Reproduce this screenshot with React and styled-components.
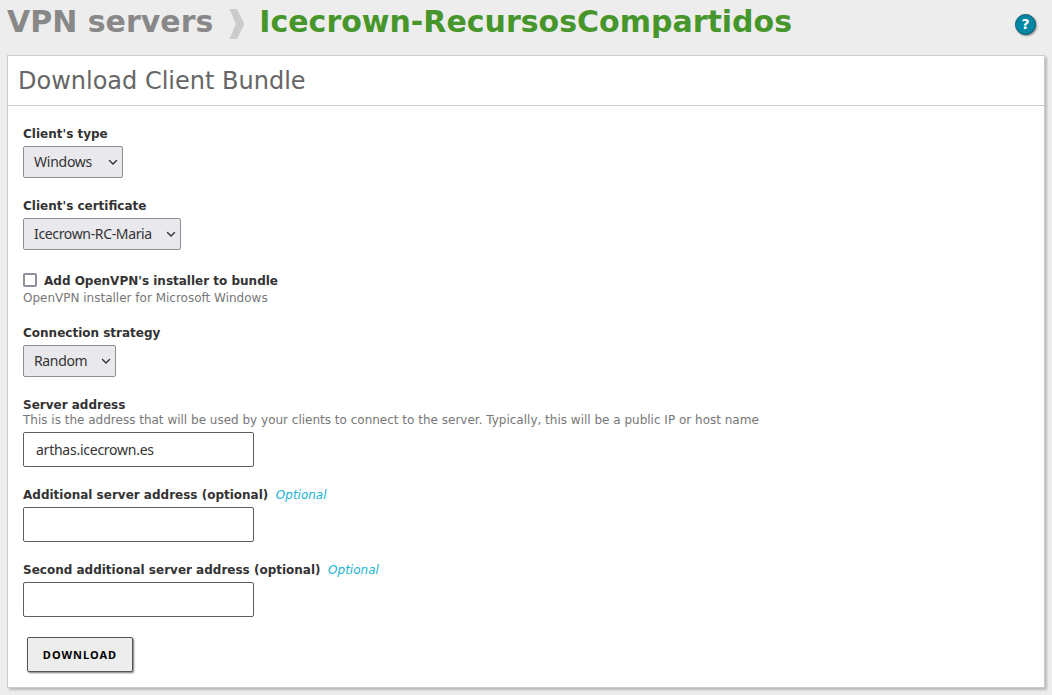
import React from "react";
import styled, { createGlobalStyle } from "styled-components";

const GlobalStyle = createGlobalStyle`
  * { box-sizing: border-box; }
  body {
    margin: 0;
    background: #ededed;
    color: #333;
    font: 12px/16px "DejaVu Sans", sans-serif;
  }
`;

const Page = styled.div`
  height: 695px;
  padding: 0 7px;
  overflow: hidden;
`;

const TopBar = styled.header`
  display: flex;
  height: 55px;
  justify-content: space-between;
  padding: 3px 9px 0 0;
`;

const Title = styled.h1`
  display: flex;
  margin: 0;
  font-size: 30px;
  line-height: 38px;
  font-weight: bold;
  color: #46962b;
  white-space: nowrap;
`;

const Crumb = styled.span`
  color: #888;
`;

const Separator = styled.svg`
  width: 16px;
  height: 30px;
  margin: 6px 14px 0 16px;
  fill: #ccc;
`;

const HelpButton = styled.a`
  width: 21px;
  height: 21px;
  margin-top: 11px;
  border: 1px solid #075e70;
  border-radius: 50%;
  background: #0486a5;
  box-shadow: 1px 1px 2px #888;
  color: #fff;
  font-size: 14px;
  line-height: 19px;
  font-weight: bold;
  text-align: center;
`;

const Panel = styled.main`
  height: 633px;
  border: 1px solid #ccc;
  background: #fff;
  box-shadow: 2px 2px 2px #bbb;
`;

const PanelTitle = styled.h2`
  height: 50px;
  margin: 0;
  padding: 0 10px;
  border-bottom: 1px solid #ccc;
  font-size: 24px;
  line-height: 51px;
  font-weight: normal;
  color: #666;
`;

const Form = styled.form`
  padding: 20px 15px 0;
`;

const Field = styled.div`
  display: flex;
  flex-direction: column;
  align-items: flex-start;
  margin-bottom: ${(p) => p.$after ?? 20}px;
`;

const Label = styled.label`
  display: flex;
  align-items: center;
  font-weight: bold;
  white-space: nowrap;
`;

const Optional = styled.span`
  margin-left: 7.5px;
  font-style: italic;
  font-weight: normal;
  color: #1ab4d3;
`;

const Help = styled.p`
  margin: ${(p) => p.$before ?? -1}px 0 0;
  color: #777;
  white-space: nowrap;
`;

const Select = styled.button`
  display: flex;
  align-items: center;
  justify-content: space-between;
  width: ${(p) => p.$width}px;
  height: 32px;
  margin-top: 4px;
  padding: 0 4px 2px 10px;
  border: 1px solid #8f8f8f;
  border-radius: 2px;
  background: #e9e9ed;
  color: #333;
  font: 14px "Noto Sans", sans-serif;
`;

const SelectText = styled.span`
  letter-spacing: ${(p) => p.$spacing}px;
  white-space: nowrap;
`;

const Chevron = styled.svg`
  width: 10px;
  height: 7px;
  margin-top: 3px;
  fill: none;
  stroke: #333;
  stroke-width: 1.4;
  stroke-linecap: round;
`;

const Input = styled.input`
  width: 231px;
  height: 35px;
  margin: 4px 0 0;
  padding: 0 12px;
  border: 1px solid #5e5e5e;
  border-radius: 2px;
  background: #fff;
  color: #333;
  font: 14px "Noto Sans", sans-serif;
  letter-spacing: -0.25px;
  outline: none;
`;

const Checkbox = styled.input`
  appearance: none;
  width: 14px;
  height: 14px;
  margin: -2px 7px 0 0;
  border: 2px solid #8f8f9d;
  border-radius: 2px;
  background: #fff;
`;

const Submit = styled.button`
  width: 106px;
  height: 35px;
  margin-left: 4px;
  padding: 0;
  border: 1px solid #555;
  border-radius: 2px;
  background: #ededed;
  box-shadow: 1px 1px 2px #777;
  color: #000;
  font: bold 11px "Noto Sans", sans-serif;
  letter-spacing: 1px;
`;

function Dropdown({ label, value, width, spacing, after }) {
  return (
    <Field $after={after}>
      <Label>{label}</Label>
      <Select type="button" $width={width}>
        <SelectText $spacing={spacing}>{value}</SelectText>
        <Chevron viewBox="0 0 10 7">
          <path d="M1.5 1.5 5 5 8.5 1.5" />
        </Chevron>
      </Select>
    </Field>
  );
}

export default function App() {
  return (
    <>
      <GlobalStyle />
      <Page>
        <TopBar>
          <Title>
            <Crumb>VPN servers</Crumb>
            <Separator viewBox="0 0 16 30">
              <path d="M0.5 0H8L15.5 15 8 30H0.5L7 15Z" />
            </Separator>
            Icecrown-RecursosCompartidos
          </Title>
          <HelpButton>?</HelpButton>
        </TopBar>
        <Panel>
          <PanelTitle>Download Client Bundle</PanelTitle>
          <Form>
            <Dropdown label="Client's type" value="Windows" width={100} spacing={-0.25} />
            <Dropdown
              label="Client's certificate"
              value="Icecrown-RC-Maria"
              width={158}
              spacing={-0.35}
              after={23}
            />
            <Field $after={19}>
              <Label>
                <Checkbox type="checkbox" />
                Add OpenVPN's installer to bundle
              </Label>
              <Help $before={1}>OpenVPN installer for Microsoft Windows</Help>
            </Field>
            <Dropdown label="Connection strategy" value="Random" width={93} spacing={-0.35} />
            <Field>
              <Label>Server address</Label>
              <Help>
                This is the address that will be used by your clients to connect to the server.
                Typically, this will be a public IP or host name
              </Help>
              <Input defaultValue="arthas.icecrown.es" />
            </Field>
            <Field>
              <Label>
                Additional server address (optional)<Optional>Optional</Optional>
              </Label>
              <Input />
            </Field>
            <Field>
              <Label>
                Second additional server address (optional)<Optional>Optional</Optional>
              </Label>
              <Input />
            </Field>
            <Submit type="button">DOWNLOAD</Submit>
          </Form>
        </Panel>
      </Page>
    </>
  );
}
